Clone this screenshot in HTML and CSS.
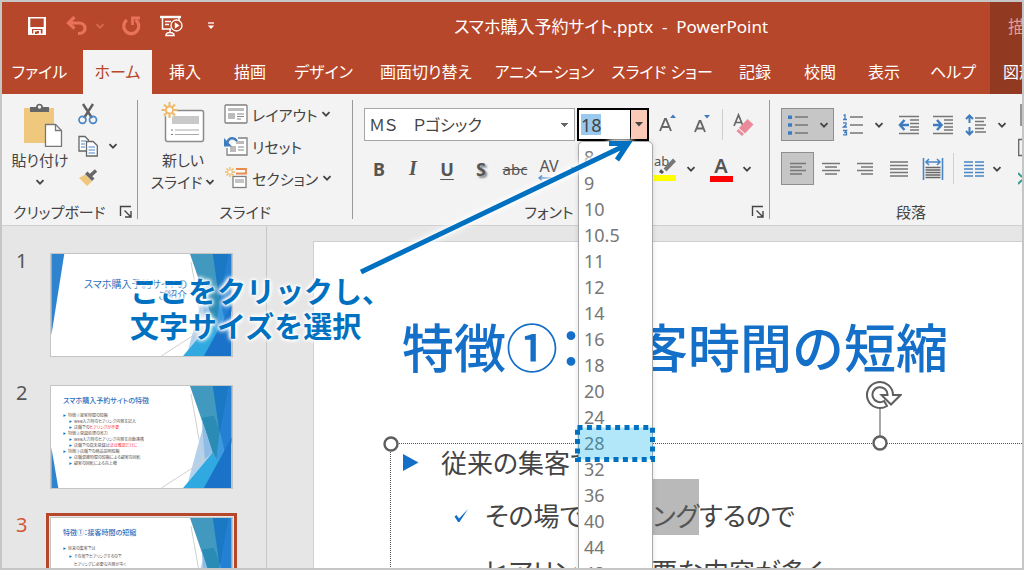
FILE: index.html
```html
<!DOCTYPE html>
<html lang="ja">
<head>
<meta charset="utf-8">
<title>スマホ購入予約サイト.pptx - PowerPoint</title>
<link rel="stylesheet" href="styles.css">
</head>
<body>
<svg class="defs" aria-hidden="true">
  <symbol id="chev" viewBox="0 0 10 10"><path d="M1.500 3.200 5 6.700 8.500 3.200" fill="none" stroke="currentColor" stroke-width="1.800"/></symbol>
  <symbol id="launch" viewBox="0 0 14 14"><path d="M1.500 11V1.500H12M5.500 5.500l6 6M12 6v6H6" fill="none" stroke="#444" stroke-width="1.400"/></symbol>
  <symbol id="deco" viewBox="0 0 182 103">
    <path d="M153 42 163 67 138 97Z" fill="#b3d0ec"/>
    <path d="M152 35 163 67 155 74Z" fill="#8fbce4"/>
    <path d="M140 0h24l8 50-5 25-4-8Z" fill="#4199bf"/>
    <path d="M164 30 172 50 167 75 163 67 152 32Z" fill="#2a8bb5"/>
    <path d="M163 0h19v58l-15 17 3-26Z" fill="#1a78c4"/>
    <path d="M182 0v55l-9 16-3-23 9-48Z" fill="#2380d2"/>
    <path d="M170 45 175 66 164 90 167 70Z" fill="#3c9be0"/>
    <path d="M163 67 133 103h24l16-34-6 6Z" fill="#2fa9e0"/>
    <path d="M182 52 154 103h28Z" fill="#1a72c9"/>
    <path d="M141 8 153 76 111 103" fill="none" stroke="#cfcfcf"/>
  </symbol>
</svg>

<div class="app">
  <header class="top">
    <div class="top-main">
      <div class="titlebar">
        <div class="qat">
          <button class="qbtn" aria-label="上書き保存"><svg width="20" height="20" viewBox="0 0 20 20"><path d="M1 1h18v18H1Z" fill="#fff"/><path d="M3.300 2.500h13.400v8.500H3.300ZM5 13h10.500v4.500H5Z" fill="#b7472a"/><path d="M6.300 14h7.500v4H12v-3h-2v3H6.300Z" fill="#fff"/><path d="M8 15.500h2.300V18H8Z" fill="#b7472a"/></svg></button>
          <button class="qbtn undo" aria-label="元に戻す"><svg width="22" height="20" viewBox="0 0 22 20"><path d="M8.500 1 2.500 7l6 5.500M3 7h10c8 0 8 10.500 0 10.500h-1" fill="none" stroke="#e8735a" stroke-width="3.200"/></svg></button>
          <button class="qchev" aria-label="元に戻す履歴"><svg width="10" height="10"><use href="#chev"/></svg></button>
          <button class="qbtn redo" aria-label="やり直し"><svg width="20" height="20" viewBox="0 0 20 20"><path d="M6 4A7.500 7.500 0 1 0 14.500 4" fill="none" stroke="#e8735a" stroke-width="3.200"/><path d="M11.500 9V2H19" fill="none" stroke="#e8735a" stroke-width="2.800"/></svg></button>
          <button class="qbtn show" aria-label="スライドショー"><svg width="24" height="22" viewBox="0 0 24 22"><path d="M1 2h21" stroke="#fff" stroke-width="2.400"/><path d="M3.500 3v11H12M20 3v3M6 6.500h6M6 9.500h4M11 14v3M7 20.500c0-4 8-4 8 0Z" fill="none" stroke="#fff" stroke-width="1.500"/><circle cx="17.500" cy="10.500" r="5.500" fill="none" stroke="#fff" stroke-width="1.300"/><path d="M15.800 7.300 20.500 10.500l-4.700 3.200Z" fill="#fff"/></svg></button>
          <button class="qbtn" aria-label="クイックアクセスのカスタマイズ"><svg width="8" height="8" viewBox="0 0 8 8"><path d="M1 1h6" stroke="#fff" stroke-width="1.300"/><path d="M.8 3.500h6.400L4 7Z" fill="#fff"/></svg></button>
        </div>
        <h1 class="doc-title">スマホ購入予約サイト.pptx&nbsp; -&nbsp; PowerPoint</h1>
      </div>
      <nav class="tabs">
        <button class="tab">ファイル</button>
        <button class="tab active">ホーム</button>
        <button class="tab">挿入</button>
        <button class="tab">描画</button>
        <button class="tab">デザイン</button>
        <button class="tab">画面切り替え</button>
        <button class="tab">アニメーション</button>
        <button class="tab">スライド ショー</button>
        <button class="tab">記録</button>
        <button class="tab">校閲</button>
        <button class="tab">表示</button>
        <button class="tab">ヘルプ</button>
      </nav>
    </div>
    <div class="context">
      <span class="context-title">描画</span>
      <button class="tab context-tab">図形</button>
    </div>
  </header>

  <section class="ribbon">
    <div class="group clipboard">
      <div class="tools">
        <button class="big">
          <svg width="40" height="44" viewBox="0 0 40 44"><path d="M1 5h30v35H1Z" fill="#efc77d"/><path d="M7 9V4h6c0-4.500 7-4.500 7 0h6v5Z" fill="#666"/><circle cx="16.500" cy="4" r="1.700" fill="#f3f3f3"/><path d="M22.500 21.500h10l6 6v16h-16Z" fill="#fff" stroke="#777" stroke-width="1.300"/><path d="M32.500 21.500v6h6" fill="none" stroke="#777" stroke-width="1.300"/></svg>
          <span>貼り付け</span>
          <svg width="10" height="10"><use href="#chev"/></svg>
        </button>
        <div class="stack">
          <button class="row" aria-label="切り取り"><svg width="20" height="22" viewBox="0 0 20 22"><path d="M5 1 14 15M15 1 6 15" stroke="#5f5f5f" stroke-width="2.400"/><circle cx="4.500" cy="16.800" r="3.500" fill="none" stroke="#4a86c5" stroke-width="1.700"/><circle cx="15" cy="16.800" r="3.500" fill="none" stroke="#4a86c5" stroke-width="1.700"/></svg></button>
          <button class="row" aria-label="コピー"><svg width="20" height="22" viewBox="0 0 20 22"><path d="M1 1.500h6l3.500 3.500v11H1Z" fill="#fff" stroke="#666" stroke-width="1.300"/><path d="M3 6h5M3 9h4M3 12h4" stroke="#4a86c5"/><path d="M8.500 6.500H15l4.300 4v10.500H8.500Z" fill="#fff" stroke="#666" stroke-width="1.300"/><path d="M10.500 12h6.500M10.500 15h6.500M10.500 18h6.500" stroke="#4a86c5"/></svg><svg width="10" height="10"><use href="#chev"/></svg></button>
          <button class="row" aria-label="書式のコピー"><svg width="20" height="18" viewBox="0 0 20 18"><path d="m1 9 6-3.500 7 7L9 17Z" fill="#efc77d"/><path d="m7 5 2.500-2.500 7 7L14 12Z" fill="#666"/><path d="m12 7 6-5.500" stroke="#666" stroke-width="3.500"/></svg></button>
        </div>
      </div>
      <div class="foot"><span>クリップボード</span><button class="launcher" aria-label="クリップボードの詳細"><svg width="14" height="14"><use href="#launch"/></svg></button></div>
    </div>
    <div class="sep"></div>

    <div class="group slides">
      <div class="tools">
        <button class="big">
          <svg width="44" height="44" viewBox="0 0 44 44"><rect x="4.500" y="9.500" width="38" height="31" rx="2" fill="#fff" stroke="#8a8a8a" stroke-width="1.500"/><path d="M11 15h27v8H11Z" fill="#c9c9c9"/><path d="M14 29h24M14 33.500h24" stroke="#aaa"/><path d="M10 29h2M10 33.500h2" stroke="#777"/><circle cx="8.500" cy="9" r="7.500" fill="#f3f3f3"/><path d="M8.500 1v16M.5 9h16M3 3.500l11 11M14 3.500l-11 11" stroke="#efb96b" stroke-width="2"/><circle cx="8.500" cy="9" r="3.500" fill="#fff" stroke="#efb96b" stroke-width="1.800"/></svg>
          <span>新しい</span>
          <span class="with-chev">スライド<svg width="10" height="10"><use href="#chev"/></svg></span>
        </button>
        <div class="stack">
          <button class="row"><svg width="24" height="20" viewBox="0 0 24 20"><rect x="1" y="1" width="22" height="18" rx="1" fill="#fff" stroke="#808080" stroke-width="1.300"/><path d="M4 4h16v3H4ZM4 9h7v6H4Z" fill="#bcbcbc"/><path d="M13 10h7M13 12.500h7M13 15h4" stroke="#888"/></svg><span>レイアウト</span><svg width="10" height="10"><use href="#chev"/></svg></button>
          <button class="row"><svg width="24" height="20" viewBox="0 0 24 20"><path d="M14 2h9v17H3v-7" fill="#fff" stroke="#808080" stroke-width="1.300"/><path d="M12 5h8v3h-8ZM6 10h6v6H6Z" fill="#bcbcbc"/><path d="M14 11h6M14 14h6" stroke="#888"/><path d="M13 5C10 1 5 1 3 7" fill="none" stroke="#3f7cbf" stroke-width="2.400"/><path d="M0 2v8.500h8Z" fill="#3f7cbf"/></svg><span>リセット</span></button>
          <button class="row"><svg width="24" height="22" viewBox="0 0 24 22"><path d="M12 2h10v4.500H12" fill="#fff" stroke="#e98b4e" stroke-width="1.800"/><rect x="9" y="9.500" width="13" height="11" fill="#fff" stroke="#808080" stroke-width="1.300"/><path d="M11 12h9v4h-9Z" fill="#c4c4c4"/><path d="M6 0v10M1 5h10M2.500 1.500l7 7M9.500 1.500l-7 7" stroke="#efb96b" stroke-width="1.400"/><circle cx="6" cy="5" r="1.800" fill="#fff"/></svg><span>セクション</span><svg width="10" height="10"><use href="#chev"/></svg></button>
        </div>
      </div>
      <div class="foot"><span>スライド</span></div>
    </div>
    <div class="sep"></div>

    <div class="group font">
      <div class="lines">
        <div class="line">
          <select class="font-name" aria-label="フォント"><option>ＭＳ　Ｐゴシック</option></select>
          <div class="size-box">
            <input class="size-input" aria-label="フォント サイズ" value="18">
            <mark class="size-mark"></mark>
            <button class="size-btn" aria-label="サイズ一覧"><svg width="8" height="5" viewBox="0 0 8 5"><path d="M0 0h8L4 4.500Z" fill="#444"/></svg></button>
            <ul class="size-list" role="listbox">
              <li>8</li><li>9</li><li>10</li><li>10.5</li><li>11</li><li>12</li><li>14</li><li>16</li><li>18</li><li>20</li><li>24</li>
              <li class="picked">28<svg class="pick-frame" width="80" height="37"><rect x="2.500" y="2.500" width="75" height="32" fill="#00b0f0" fill-opacity=".3" stroke="#0070c0" stroke-width="5" stroke-dasharray="5 4.400"/></svg></li>
              <li>32</li><li>36</li><li>40</li><li>44</li><li>48</li>
            </ul>
          </div>
          <button class="tool first" aria-label="フォント サイズの拡大"><svg width="20" height="22" viewBox="0 0 20 22"><path d="m2 17 5-12h1l5 12M4 13h7" fill="none" stroke="#666" stroke-width="1.900"/><path d="m12 4 3-3.500L18 4Z" fill="#3f7cbf"/></svg></button>
          <button class="tool" aria-label="フォント サイズの縮小"><svg width="20" height="22" viewBox="0 0 20 22"><path d="m3 18 4.500-11h1L13 18M5 14.500h6" fill="none" stroke="#666" stroke-width="1.900"/><path d="m12 1 3 3.500L18 1Z" fill="#3f7cbf"/></svg></button>
          <span class="vline"></span>
          <button class="tool" aria-label="書式のクリア"><svg width="22" height="24" viewBox="0 0 22 24"><path d="m2 13 4.500-11L11 13M4 9.500h5" fill="none" stroke="#666" stroke-width="1.700"/><path d="m7 15 8.500-9 6 5.500-8.500 9Z" fill="#ea8b9b"/><path d="m5.500 17 5.500 5" stroke="#ea8b9b" stroke-width="3"/></svg></button>
        </div>
        <div class="line marks">
          <button class="tool"><b>B</b></button>
          <button class="tool"><i class="ital">I</i></button>
          <button class="tool"><b class="under">U</b></button>
          <button class="tool"><b class="shadow">S</b></button>
          <button class="tool"><s class="strike">abc</s></button>
          <button class="tool" aria-label="文字の間隔"><span class="spacing">AV<svg width="22" height="6" viewBox="0 0 22 6"><path d="M1 3h20M4 .5 1 3l3 2.500M18 .5l3 2.500-3 2.500" fill="none" stroke="#4a86c5" stroke-width="1.300"/></svg></span></button>
          <button class="mini" aria-label="文字の間隔の選択"><svg width="10" height="10"><use href="#chev"/></svg></button>
          <button class="case" aria-label="文字種の変換"></button>
          <button class="tool" aria-label="蛍光ペンの色"><svg width="24" height="26" viewBox="0 0 24 26"><path d="m6 16 2-3 3 3-2 2Z" fill="#555"/><text x="1" y="10" class="glyph">ab</text><path d="m12 14 9.500-10" stroke="#777" stroke-width="4"/><path d="M1 19h22v6H1Z" fill="#ff0"/></svg></button>
          <button class="mini" aria-label="蛍光ペンの選択"><svg width="10" height="10"><use href="#chev"/></svg></button>
          <button class="tool wide-left" aria-label="フォントの色"><span class="fcolor">A</span></button>
          <button class="mini" aria-label="フォントの色の選択"><svg width="10" height="10"><use href="#chev"/></svg></button>
        </div>
      </div>
      <div class="foot"><span>フォント</span><button class="launcher" aria-label="フォントの詳細"><svg width="14" height="14"><use href="#launch"/></svg></button></div>
    </div>
    <div class="sep"></div>

    <div class="group para">
      <div class="lines">
        <div class="line">
          <button class="pair on" aria-label="箇条書き"><svg width="22" height="20" viewBox="0 0 22 20"><path d="M8 2h13M8 10h13M8 18h13" stroke="#777" stroke-width="1.400"/><path d="M1 .5h4v3.500H1ZM1 8.300h4v3.500H1ZM1 16.200h4v3.500H1Z" fill="#3f7cbf"/></svg><svg width="10" height="10"><use href="#chev"/></svg></button>
          <button class="pair numbered" aria-label="段落番号"><svg width="22" height="22" viewBox="0 0 22 22"><path d="M8 3h13M8 11h13M8 19h13" stroke="#777" stroke-width="1.400"/><path d="M1.500 1.500 3 .8v4.500M1 5.500h4M1 8.800h3v2L1.500 13H5M1 16.500h3.500L3 18.500h1.500v2.300H1" fill="none" stroke="#3f7cbf" stroke-width="1.300"/></svg><svg width="10" height="10"><use href="#chev"/></svg></button>
          <button class="tool" aria-label="インデントを減らす"><svg width="22" height="20" viewBox="0 0 22 20"><path d="M1 1.500h20M1 18.500h20M12 5h9M12 8.500h9M12 12h9M12 15h9" stroke="#777" stroke-width="1.300"/><path d="M6.500 5 2 10l4.500 5M2 10h9" fill="none" stroke="#3f7cbf" stroke-width="2.500"/></svg></button>
          <button class="tool" aria-label="インデントを増やす"><svg width="22" height="20" viewBox="0 0 22 20"><path d="M1 1.500h20M1 18.500h20M12 5h9M12 8.500h9M12 12h9M12 15h9" stroke="#777" stroke-width="1.300"/><path d="m5 5 4.500 5L5 15M1 10h8.500" fill="none" stroke="#3f7cbf" stroke-width="2.500"/></svg></button>
          <button class="pair" aria-label="行間"><svg width="22" height="22" viewBox="0 0 22 22"><path d="M10 4h11M10 7.500h9M10 11h11M10 14.500h9M10 18h11" stroke="#777" stroke-width="1.300"/><path d="M4.500 2v7M4.500 13v7M1 5l3.500-3.500L8 5M1 17l3.500 3.500L8 17" fill="none" stroke="#3f7cbf" stroke-width="2"/></svg><svg width="10" height="10"><use href="#chev"/></svg></button>
        </div>
        <div class="line">
          <button class="tool on" aria-label="左揃え"><svg width="18" height="14" viewBox="0 0 18 14"><path d="M1 1.500h16M1 5h12M1 8.500h16M1 12h12" stroke="#777" stroke-width="1.300"/></svg></button>
          <button class="tool" aria-label="中央揃え"><svg width="18" height="14" viewBox="0 0 18 14"><path d="M0 1.500h18M3 5h12M0 8.500h18M3 12h12" stroke="#777" stroke-width="1.300"/></svg></button>
          <button class="tool" aria-label="右揃え"><svg width="18" height="14" viewBox="0 0 18 14"><path d="M1 1.500h16M5 5h12M1 8.500h16M5 12h12" stroke="#777" stroke-width="1.300"/></svg></button>
          <button class="tool" aria-label="両端揃え"><svg width="20" height="18" viewBox="0 0 20 18"><path d="M1 2h18M1 5.500h18M1 9h18M1 12.500h18M1 16h18" stroke="#777" stroke-width="1.300"/></svg></button>
          <button class="tool" aria-label="均等割り付け"><svg width="22" height="22" viewBox="0 0 22 22"><path d="M1.500 0v22M20.500 0v22M4 4h14M7 1 4 4l3 3M15 1l3 3-3 3" fill="none" stroke="#4a86c5" stroke-width="1.600"/><path d="M3.500 9.500h15M3.500 12h15M3.500 14.500h15M3.500 17h15M3.500 19.500h15" stroke="#666" stroke-width="1.300"/></svg></button>
          <span class="vline"></span>
          <button class="pair columns" aria-label="段組み"><svg width="22" height="18" viewBox="0 0 22 18"><path d="M1 2h9M1 5.500h9M1 9h9M1 12.500h9M1 16h9M12 2h9M12 5.500h9M12 9h9M12 12.500h9M12 16h9" stroke="#4a86c5" stroke-width="1.400"/></svg><svg width="10" height="10"><use href="#chev"/></svg></button>
        </div>
      </div>
      <div class="foot"><span>段落</span></div>
    </div>
    <svg class="edge" width="4" height="90" viewBox="0 0 4 90"><path d="M3 2v22M4 37.500H.7v16H4" fill="none" stroke="#666" stroke-width="1.300"/><path d="m0 71 4 4M0 82l4-4" stroke="#3c9c98" stroke-width="2"/></svg>
  </section>

  <main class="work">
    <aside class="thumbs">
      <div class="thumb-row"><span class="num">1</span>
        <div class="thumb"><svg class="art" viewBox="0 0 182 103"><use href="#deco"/><path d="M0 0h13L0 82Z" fill="#2f84d0"/></svg>
          <p class="cover">スマホ購入予約サイトの<br>ご紹介</p></div></div>
      <div class="thumb-row"><span class="num">2</span>
        <div class="thumb"><svg class="art" viewBox="0 0 182 103"><use href="#deco"/><path d="M0 62v41h7Z" fill="#2f84d0"/></svg>
          <p class="mini-title">スマホ購入予約サイトの特徴</p>
          <ul class="mini-list">
            <li>特徴①接客時間の短縮</li><li class="sub">WEB入力時のヒアリング内容を記入</li><li class="sub">店舗での<em>ヒアリングが不要</em></li>
            <li>特徴②登録処理の省力</li><li class="sub">WEB入力時のヒアリング内容を自動連携</li><li class="sub">店舗での端末登録は<em>ほぼ確認だけに</em></li>
            <li>特徴③店舗での商品説明短縮</li><li class="sub">店舗混雑時間の短縮による顧客の回転</li><li class="sub">顧客の回転による売上増</li>
          </ul></div></div>
      <div class="thumb-row current"><span class="num">3</span>
        <div class="thumb"><svg class="art" viewBox="0 0 182 103"><use href="#deco"/><path d="M0 62v41h7Z" fill="#2f84d0"/></svg>
          <p class="mini-title">特徴①：接客時間の短縮</p>
          <ul class="mini-list loose">
            <li>従来の集客では</li><li class="sub">その場でヒアリングするので</li><li class="sub plain">ヒアリングに必要な内容が多く</li><li class="sub plain">ヒアリングに時間がかかる</li>
          </ul></div></div>
    </aside>
    <div class="canvas">
      <article class="slide">
        <h2 class="slide-title">特徴①<span class="half">：</span>接客時間の短縮</h2>
        <div class="textbox">
          <svg class="handle corner" width="16" height="16"><circle cx="8" cy="8" r="6.500" fill="#fff" stroke="#5f5f5f" stroke-width="2.400"/></svg>
          <svg class="handle rotate" width="38" height="72" viewBox="0 0 38 72"><path d="M16 29v28" stroke="#777" stroke-width="1.300"/><path d="M29 16A13 13 0 1 0 23 27L20 22A7.500 7.500 0 1 1 23.500 16H17.500L27 25.500 36.500 16Z" fill="#fff" stroke="#5f5f5f" stroke-width="2"/><circle cx="16" cy="64" r="6.500" fill="#fff" stroke="#5f5f5f" stroke-width="2.400"/></svg>
          <p class="para-1"><svg width="16" height="17" viewBox="0 0 16 17"><path d="M0 0 15.500 8.500 0 17Z" fill="#146fc9"/></svg><span>従来の集客では</span></p>
          <p class="para-2"><svg width="15" height="15" viewBox="0 0 15 15"><path d="M.5 8.500 2.500 7 5 10.500 14 1 5.500 14H4Z" fill="#146fc9"/></svg><span class="body">その場で<span class="sel">ヒアリング</span>するので</span></p>
          <p class="para-2"><svg width="15" height="15"></svg><span class="body">ヒアリングに必要な内容が多く</span></p>
        </div>
      </article>
    </div>
  </main>

  <svg class="arrow" width="300" height="160" viewBox="350 130 300 160"><path d="M361 272 626 145M609 143.500h19L617 160" fill="none" stroke="#0070c0" stroke-width="5"/></svg>
  <p class="callout">ここをクリックし、<br>文字サイズを選択</p>
</div>
</body>
</html>
```

FILE: styles.css
```css
* { box-sizing: border-box; }
body, h1, h2, p, ul { margin: 0; padding: 0; }
body {
  font-family: "Noto Sans", "Noto Sans CJK JP", sans-serif;
  font-size: 15px;
  font-feature-settings: "palt";
  color: #444;
}
button, input, select { font: inherit; font-feature-settings: inherit; color: inherit; border: 0; background: none; padding: 0; margin: 0; border-radius: 0; }
ul { list-style: none; }
svg { display: block; flex: none; }
.defs { position: absolute; width: 0; height: 0; }

.app {
  position: relative;
  display: flex;
  flex-direction: column;
  height: 100vh;
  border: 2px solid #c6c6c6;
  overflow: hidden;
  background: #e6e6e6;
}

/* title bar and tabs */
.top { display: flex; background: #b7472a; color: #fff; flex: none; }
.top-main { flex: 1; min-width: 0; }
.titlebar { display: flex; align-items: center; height: 48px; }
.qat { display: flex; align-items: center; width: 452px; padding-left: 25px; }
.qbtn { display: flex; align-items: center; }
.undo { margin-left: 19px; }
.qchev { margin-left: 7px; color: #d9694f; }
.redo { margin-left: 16px; }
.show { margin: 0 24px 0 18px; }
.doc-title { padding-top: 2px; font-size: 17px; font-weight: 400; line-height: 24px; white-space: nowrap; }
.tabs { display: grid; grid-template-columns: 77px 73px 64px 64px 83px 122px 115px 120px 66px 64px 64px 1fr; height: 44px; }
.tabs { grid-template-columns: 81px 69px 66px 64px 83px 122px 115px 120px 66px 64px 64px 1fr; }
.tab { font-size: 16px; line-height: 24px; white-space: nowrap; color: #fff; text-align: center; }
.tab:first-child { padding-right: 6px; }
.tab.active { background: #f3f3f3; color: #b7472a; }
.context { display: flex; flex-direction: column; width: 32px; background: #923922; overflow: hidden; white-space: nowrap; }
.context-title { height: 48px; line-height: 50px; padding-left: 18px; font-size: 17px; color: #e0a090; }
.context-tab { height: 44px; padding-left: 13px; text-align: left; }

/* ribbon */
.ribbon { display: flex; flex: none; height: 132px; background: #f3f3f3; border-bottom: 1px solid #cfcfcf; }
.group { display: flex; flex-direction: column; flex: none; }
.sep { width: 1px; margin: 6px 0; background: #999; flex: none; }
.clipboard { width: 135px; }
.slides { width: 214px; }
.font { width: 416px; }
.para { flex: 1; min-width: 0; }
.tools { display: flex; flex: 1; padding-top: 4px; }
.big { display: flex; flex-direction: column; align-items: center; width: 76px; padding-top: 5px; line-height: 22px; white-space: nowrap; }
.big > svg:first-child { margin-bottom: 2px; }
.clipboard .big > svg:first-child { margin-left: 6px; }
.slides .big { width: 86px; padding: 3px 0 0 4px; }
.slides .big > svg:first-child { margin-bottom: 4px; }
.with-chev { display: flex; align-items: center; gap: 3px; }
.big > svg:last-child { margin-top: 6px; }
.stack { display: flex; flex-direction: column; }
.row { display: flex; align-items: center; gap: 4px; height: 32px; white-space: nowrap; }
.clipboard .row { gap: 10px; }
.foot { display: flex; align-items: center; justify-content: center; height: 26px; line-height: 22px; position: relative; }
.clipboard .foot { justify-content: space-between; padding: 0 4px 0 11px; }
.font .foot { padding-right: 24px; }
.para .foot { padding-left: 34px; }
.launcher { display: flex; }
.font .launcher { position: absolute; right: 4px; top: 6px; }
.lines { display: flex; flex-direction: column; gap: 11px; flex: 1; padding-top: 14px; }
.line { display: flex; height: 33px; align-items: stretch; }
.font .line { padding-left: 11px; }
.font .marks { padding-left: 9px; }
.para .line { padding-left: 11px; }
.tool { display: flex; align-items: center; justify-content: center; width: 34px; flex: none; font-size: 18px; color: #555; }
.tool.on, .pair.on { width: 33px; background: #c6c6c6; border: 1px solid #8f8f8f; }
.pair { display: flex; align-items: center; justify-content: center; gap: 10px; width: 52px; flex: none; }
.pair.on { width: 53px; }
.numbered { width: 58px; }
.columns { gap: 7px; width: 50px; }
.mini { display: flex; align-items: center; justify-content: center; width: 18px; }
.wide-left { margin-left: 4px; }
.vline { width: 1px; margin: 1px 3px; background: #d0d0d0; }
.case { width: 64px; }

.font-name {
  appearance: none;
  width: 211px;
  padding: 0 4px;
  border: 1px solid #a6a6a6;
  font-size: 16px;
  background: linear-gradient(#666, #666) no-repeat right 6px top 14px / 7px 1px, linear-gradient(#666, #666) no-repeat right 7px top 15px / 5px 1px, linear-gradient(#666, #666) no-repeat right 8px top 16px / 3px 1px, linear-gradient(#666, #666) no-repeat right 9px top 17px / 1px 1px, #fff;
}
.size-box { position: relative; display: flex; width: 72px; margin-left: 2px; border: 2px solid #000; background: #fff; }
.size-input { position: relative; width: 51px; padding-left: 2px; font-size: 18px; z-index: 1; }
.size-mark { position: absolute; left: 2px; top: 4px; width: 20px; height: 21px; background: #99c9ef; }
.size-btn { display: flex; flex: 1; align-items: center; justify-content: center; border-left: 1px solid #000; background: #fbc9b8; }
.size-list {
  position: absolute;
  z-index: 2;
  left: -1px;
  top: 31px;
  width: 75px;
  padding-top: 2px;
  border: 1px solid #aaa;
  border-radius: 5px;
  background: #fff;
  box-shadow: 0 0 5px #0002;
  font-size: 18px;
  line-height: 26px;
  color: #777;
}
.size-list li { position: relative; padding-left: 5px; height: 26px; }
.pick-frame { position: absolute; left: -4px; top: -5px; }
.first { margin-left: 2px; }
.ital { font-family: "Liberation Serif", serif; font-size: 20px; font-weight: 700; }
.under { text-decoration: underline; text-decoration-thickness: 1px; text-underline-offset: 3px; }
.shadow { text-shadow: 2px 2px 2px #888; }
.strike { font-size: 15px; }
.spacing { display: flex; flex-direction: column; align-items: center; font-size: 16px; line-height: 18px; }
.glyph { font-size: 13px; fill: #555; }
.fcolor { width: 23px; font-size: 20px; font-weight: 600; line-height: 20px; border-bottom: 6px solid #f00; text-align: center; }
.edge { align-self: flex-start; margin-top: 8px; }

/* slide list */
.work { display: flex; flex: 1; min-height: 0; }
.thumbs { display: flex; flex-direction: column; gap: 28px; width: 265px; flex: none; padding: 27px 0 0 14px; border-right: 1px solid #c6c6c6; overflow: hidden; }
.thumb-row { display: flex; flex: none; }
.num { width: 34px; font-size: 20px; line-height: 16px; color: #555; }
.thumb { position: relative; width: 183px; height: 104px; border: 1px solid #c4c4c4; background: #fff; overflow: hidden; color: #555; }
.current .num { color: #d2573a; }
.current .thumb { outline: 3px solid #b7472a; outline-offset: 1px; }
.art { position: absolute; inset: 0; width: 100%; height: 100%; }
.cover { position: relative; width: 136px; padding-top: 25px; font-size: 10px; line-height: 11px; text-align: right; color: #2e6fbe; white-space: nowrap; }
.mini-title { position: relative; padding: 10px 0 0 12px; font-size: 7px; line-height: 10px; font-weight: 500; color: #2e6fbe; }
.mini-list { position: relative; padding: 7px 0 0 12px; font-size: 4px; line-height: 6px; }
.mini-list.loose { line-height: 7px; }
.mini-list li::before { content: "▶"; color: #146fc9; font-size: 3px; margin-right: 2px; }
.mini-list .sub { padding-left: 6px; }
.mini-list .plain::before { visibility: hidden; }
.mini-list em { font-style: normal; color: #f33; }

/* slide canvas */
.canvas { display: flex; flex: 1; min-width: 0; padding: 15px 0 0 46px; }
.slide { flex: 1; min-width: 0; background: #fff; border: solid #cfcfcf; border-width: 1px 0 0 1px; font-family: "Noto Sans CJK JP", sans-serif; overflow: hidden; }
.slide-title { padding: 74px 0 0 88px; font-size: 52px; line-height: 60px; font-weight: 500; color: #146fc9; white-space: nowrap; font-feature-settings: normal; }
.half { font-feature-settings: "halt"; }
.textbox { position: relative; margin: 67px 0 0 76px; padding: 1px 0 0 12px; border: dotted #555; border-width: 1px 0 0 1px; white-space: nowrap; font-size: 26px; color: #444; }
.handle { position: absolute; }
.corner { left: -8px; top: -8px; }
.rotate { left: 473px; top: -65px; }
.para-1, .para-2 { display: flex; align-items: center; }
.para-1 { gap: 22px; line-height: 34px; }
.para-2 { gap: 16px; padding-left: 51px; line-height: 40px; }
.body { padding-top: 16px; }
.para-2 > svg { margin-top: 16px; }
.sel { display: inline-block; padding-top: 16px; margin-top: -16px; background: #b9b9b9; color: #555; }

/* annotation */
.arrow { position: absolute; left: 348px; top: 128px; z-index: 3; filter: drop-shadow(0 0 2px #fff) drop-shadow(0 0 3px #fff); }
.callout {
  position: absolute;
  z-index: 3;
  left: 128px;
  top: 271px;
  font-family: "Noto Sans CJK JP", sans-serif;
  font-feature-settings: normal;
  font-size: 29px;
  line-height: 35px;
  font-weight: 700;
  color: #0070c0;
  white-space: nowrap;
  text-shadow: 0 0 3px #fff, 0 0 3px #fff, 0 0 4px #fff, 0 0 5px #fff, 0 0 6px #fff;
}
```
